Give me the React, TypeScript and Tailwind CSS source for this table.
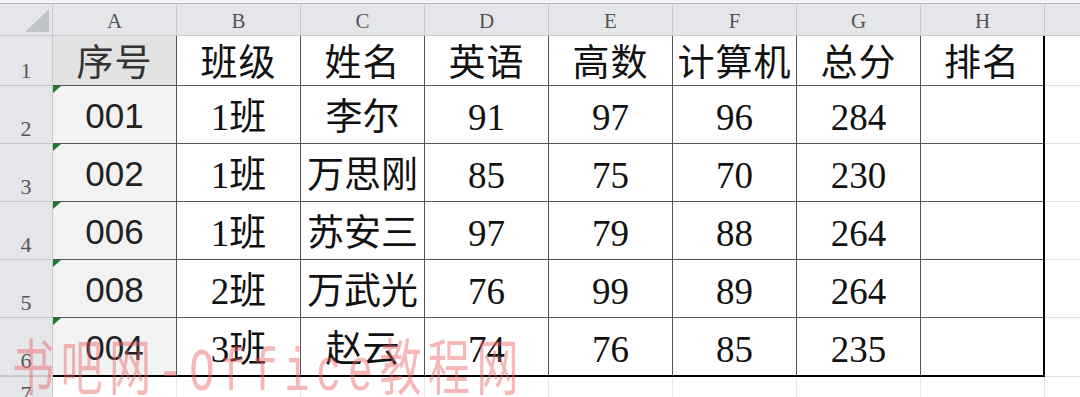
import React from "react";

const serif = "font-['Liberation_Serif','Noto_Sans_CJK_SC',serif]";

const cols = ["A", "B", "C", "D", "E", "F", "G", "H"];
const header = ["序号", "班级", "姓名", "英语", "高数", "计算机", "总分", "排名"];
const rows = [
  ["001", "1班", "李尔", "91", "97", "96", "284", ""],
  ["002", "1班", "万思刚", "85", "75", "70", "230", ""],
  ["006", "1班", "苏安三", "97", "79", "88", "264", ""],
  ["008", "2班", "万武光", "76", "99", "89", "264", ""],
  ["004", "3班", "赵云", "74", "76", "85", "235", ""],
];

export default function App() {
  return (
    <div className="relative w-[1080px] h-[397px] overflow-hidden bg-white">
      <div className="h-[3px] bg-[#f4f4f4]" />
      {/* column header row */}
      <div className="grid grid-cols-[53px_repeat(8,124px)_1fr] h-[33px] border-t border-[#b4b7bb] bg-[#e4e6ea]">
        <div className="relative border-r border-b border-[#c6c9ce]">
          <div className="absolute right-[3px] bottom-[3px] w-[24px] h-[23px] bg-[#bfc3c8] [clip-path:polygon(100%_0,100%_100%,0_100%)]" />
        </div>
        {cols.map((c) => (
          <div
            key={c}
            className={`flex items-end justify-center pb-[3px] border-r border-b border-[#c6c9ce] text-[21px] leading-none text-[#555] ${serif}`}
          >
            {c}
          </div>
        ))}
        <div className="border-b border-[#c6c9ce]" />
      </div>
      {/* row 1 */}
      <div className="grid grid-cols-[53px_repeat(8,124px)_1fr] h-[50px]">
        <div className={`flex items-end justify-center pb-[3px] bg-[#e4e6ea] border-r border-b border-[#c6c9ce] text-[22px] leading-none text-[#555] ${serif}`}>
          1
        </div>
        {header.map((h, i) => (
          <div
            key={h}
            className={`flex items-center justify-center pt-[5px] border-b border-[#555] text-[37px] leading-none tracking-[1px] ${
              i === 7 ? "border-r-2 border-r-black" : "border-r"
            } ${i === 0 ? "bg-[#e2e2e2] text-[#333]" : "text-[#111]"} ${serif}`}
          >
            {h}
          </div>
        ))}
        <div className="border-b border-[#e2e2e2]" />
      </div>
      {/* data rows */}
      {rows.map((r, ri) => (
        <div key={ri} className={`grid grid-cols-[53px_repeat(8,124px)_1fr] ${ri === 4 ? "h-[59px]" : "h-[58px]"}`}>
          <div
            className={`flex items-end justify-center pb-[3px] bg-[#e4e6ea] border-r border-[#c6c9ce] ${
              ri === 4 ? "border-b-2 border-b-[#c6c9ce]" : "border-b"
            } text-[22px] leading-none text-[#555] ${serif}`}
          >
            {ri + 2}
          </div>
          {r.map((v, ci) => (
            <div
              key={ci}
              className={`relative flex items-center justify-center border-[#555] ${
                ci === 7 ? "border-r-2 border-r-black" : "border-r"
              } ${ri === 4 ? "border-b-2 border-b-black" : "border-b"} ${
                ci === 0
                  ? "bg-[#f2f2f2] pt-[1px] font-['Liberation_Sans',sans-serif] text-[35px] leading-none text-[#222]"
                  : `pt-[6px] text-[37px] leading-none text-[#111] ${serif}`
              }`}
            >
              {ci === 0 && (
                <div className="absolute left-0 top-0 w-[8px] h-[7px] bg-[#1d7a2f] [clip-path:polygon(0_0,100%_0,0_100%)]" />
              )}
              {v}
            </div>
          ))}
          <div className="border-b border-[#e2e2e2]" />
        </div>
      ))}
      {/* row 7 */}
      <div className="grid grid-cols-[53px_repeat(8,124px)_1fr] h-[30px]">
        <div className={`flex items-start justify-center pt-[6px] bg-[#e4e6ea] border-r border-[#c6c9ce] text-[22px] leading-none text-[#555] ${serif}`}>
          7
        </div>
        {cols.map((c) => (
          <div key={c} className="border-r border-[#e6e6e6]" />
        ))}
        <div />
      </div>
      {/* watermark */}
      <div className="pointer-events-none absolute left-[12px] top-[344px] origin-top-left scale-y-[1.45] whitespace-nowrap font-['Liberation_Mono','Noto_Sans_CJK_SC',monospace] text-[42px] leading-none tracking-[6.5px] text-[rgba(236,96,96,0.45)]">
        书吧网-Office教程网
      </div>
    </div>
  );
}
